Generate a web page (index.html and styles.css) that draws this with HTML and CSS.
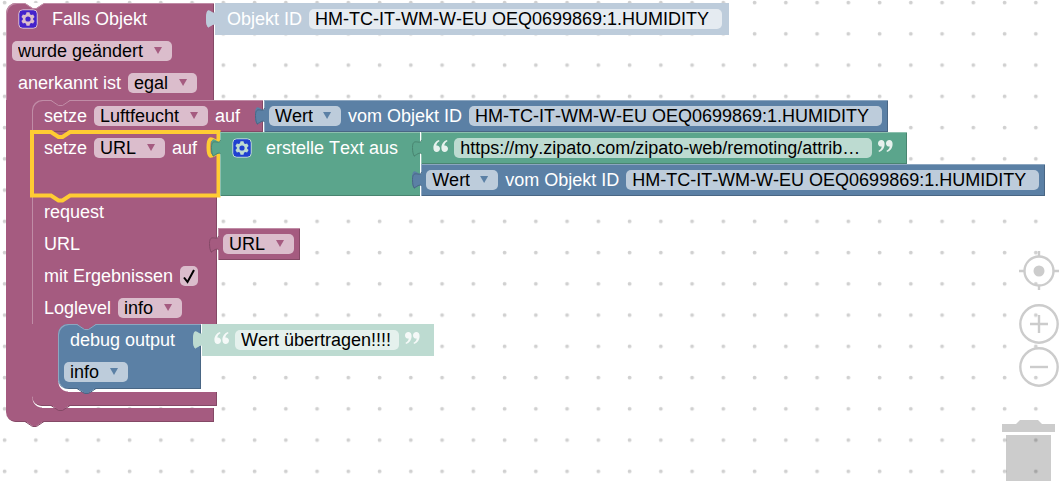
FILE: index.html
```html
<!DOCTYPE html>
<html lang="de">
<head>
<meta charset="utf-8">
<meta name="viewport" content="width=device-width, initial-scale=1">
<title>Blockly</title>
<link rel="stylesheet" href="styles.css">
</head>
<body>
<svg class="defs" aria-hidden="true">
  <defs>
    <symbol id="tab" viewBox="0 0 10 26">
      <path class="tab-fill" d="M10 6c0 12.5-10-10-10 9.5s10-3 10 9.5z"/>
      <path class="tab-dark" d="M9.500 8C8.500 14 .5 4.500 .5 15.500c0 4 .6 7 2 9"/>
      <path class="tab-low" d="M2 23.500C4 24 6 20 9.500 21.500"/>
    </symbol>
    <symbol id="notch" viewBox="0 0 19 6">
      <path class="notch-fill" d="M0 0l7.500 5h4L19 0z"/>
      <path class="notch-line" d="M0 .5l7.500 5h4L19 .5"/>
    </symbol>
    <symbol id="gear" viewBox="0 0 20 20">
      <rect class="gear-box" x=".75" y=".75" width="18.500" height="18.500" rx="4"/>
      <path class="gear-ring" fill-rule="evenodd" d="M8.500 3.300h3l.5 1.900 1.200.7 1.900-.5 1.500 2.500-1.400 1.400v1.400l1.400 1.400-1.500 2.500-1.900-.5-1.200.7-.5 1.900h-3l-.5-1.900-1.200-.7-1.900.5-1.500-2.500 1.400-1.400V9.300L3.400 7.900l1.500-2.500 1.900.5 1.200-.7zM10 7.400a2.600 2.600 0 1 0 0 5.200a2.600 2.600 0 1 0 0-5.200z"/>
    </symbol>
    <symbol id="quote" viewBox="0 0 15 12">
      <path d="M3.300 0C5.300 0 6.600 1.600 6.600 4c0 4-2.300 7-5.600 8l-.5-1.200C2.400 9.900 3.500 8.500 3.700 6.500 1.700 6.800 0 5.400 0 3.400 0 1.400 1.500 0 3.300 0z"/>
      <path d="M11.300 0c2 0 3.300 1.600 3.300 4 0 4-2.300 7-5.600 8l-.5-1.200c1.900-.9 3-2.300 3.200-4.300-2 .3-3.700-1.100-3.700-3.100 0-2 1.500-3.400 3.300-3.400z"/>
    </symbol>
    <pattern id="dots" x="2" y="0" width="31.250" height="31.250" patternUnits="userSpaceOnUse">
      <circle class="dot" cx="2.600" cy="2.600" r="1.900"/>
    </pattern>
  </defs>
</svg>

<main class="workspace">
  <svg class="grid" aria-hidden="true"><rect width="100%" height="100%" fill="url(#dots)"/></svg>

  <section class="block event purple">
    <svg class="notch notch-top"><use href="#notch"/></svg>
    <div class="row">
      <div class="cell round-top">
        <button class="gear" aria-label="Einstellungen"><svg><use href="#gear"/></svg></button>
        <span class="after-gear">Falls Objekt</span>
      </div>
      <div class="value shadow-blue lead">
        <svg class="tab"><use href="#tab"/></svg>
        <label for="oid1">Objekt ID</label>
        <input class="field oid" id="oid1" type="text" value="HM-TC-IT-WM-W-EU OEQ0699869:1.HUMIDITY">
      </div>
    </div>
    <div class="row">
      <div class="cell field-first">
        <span class="drop"><select class="field" aria-label="Auslöser"><option>wurde geändert</option></select></span>
      </div>
    </div>
    <div class="row last">
      <div class="cell">
        <label for="ack">anerkannt ist</label>
        <span class="drop"><select class="field" id="ack"><option>egal</option></select></span>
      </div>
    </div>

    <div class="body">
      <section class="block purple">
        <svg class="notch notch-top"><use href="#notch"/></svg>
        <div class="row">
          <div class="cell round-top closed">
            <label for="var1">setze</label>
            <span class="drop"><select class="field" id="var1"><option>Luftfeucht</option></select></span>
            <span>auf</span>
          </div>
          <div class="value blue">
            <svg class="tab"><use href="#tab"/></svg>
            <span class="drop"><select class="field" aria-label="Attribut"><option>Wert</option></select></span>
            <label for="oid2">vom Objekt ID</label>
            <input class="field oid" id="oid2" type="text" value="HM-TC-IT-WM-W-EU OEQ0699869:1.HUMIDITY">
          </div>
        </div>
      </section>

      <section class="block purple selected">
        <svg class="outline" viewBox="0 0 187 64" aria-hidden="true"><path d="M0 0h19l7.500 5h4L38 0h148.500v6c0 12.500-10-10-10 9.500s10-3 10 9.500v38.500H38l-7.500 5h-4l-7.500-5H0z"/></svg>
        <div class="row">
          <div class="cell top">
            <label for="var2">setze</label>
            <span class="drop"><select class="field" id="var2"><option>URL</option></select></span>
            <span>auf</span>
          </div>
          <div class="join green">
            <svg class="tab"><use href="#tab"/></svg>
            <div class="cell top">
              <button class="gear blue-gear" aria-label="Einstellungen"><svg><use href="#gear"/></svg></button>
              <span class="after-gear">erstelle Text aus</span>
            </div>
            <div class="inputs">
              <div class="value green quoted">
                <svg class="tab"><use href="#tab"/></svg>
                <svg class="quote open"><use href="#quote"/></svg>
                <input class="field url" type="text" aria-label="Text" value="https://my.zipato.com/zipato-web/remoting/attrib…">
                <svg class="quote"><use href="#quote"/></svg>
              </div>
              <div class="value blue">
                <svg class="tab"><use href="#tab"/></svg>
                <span class="drop"><select class="field" aria-label="Attribut"><option>Wert</option></select></span>
                <label for="oid3">vom Objekt ID</label>
                <input class="field oid" id="oid3" type="text" value="HM-TC-IT-WM-W-EU OEQ0699869:1.HUMIDITY">
              </div>
            </div>
          </div>
        </div>
      </section>

      <section class="block purple request">
        <div class="row"><div class="cell"><span>request</span></div></div>
        <div class="row">
          <div class="cell"><span>URL</span></div>
          <div class="value purple">
            <svg class="tab"><use href="#tab"/></svg>
            <span class="drop"><select class="field" aria-label="Variable"><option>URL</option></select></span>
          </div>
        </div>
        <div class="row">
          <div class="cell">
            <label for="res">mit Ergebnissen</label>
            <span class="check">
              <input class="field" id="res" type="checkbox" checked>
              <svg viewBox="0 0 18 20" aria-hidden="true"><path d="M4 11.500L7.500 16 14 4"/></svg>
            </span>
          </div>
        </div>
        <div class="row">
          <div class="cell">
            <label for="log">Loglevel</label>
            <span class="drop"><select class="field" id="log"><option>info</option></select></span>
          </div>
        </div>
        <div class="body">
          <section class="block blue debug">
            <svg class="notch notch-top"><use href="#notch"/></svg>
            <div class="row">
              <div class="cell round-top"><span>debug output</span></div>
              <div class="value shadow-green quoted">
                <svg class="tab"><use href="#tab"/></svg>
                <svg class="quote open"><use href="#quote"/></svg>
                <input class="field msg" type="text" aria-label="Text" value="Wert übertragen!!!!">
                <svg class="quote"><use href="#quote"/></svg>
              </div>
            </div>
            <div class="row last">
              <div class="cell field-first round-bottom">
                <span class="drop"><select class="field" aria-label="Stufe"><option>info</option></select></span>
              </div>
            </div>
            <svg class="notch notch-bottom"><use href="#notch"/></svg>
          </section>
        </div>
        <div class="foot"></div>
        <svg class="notch notch-bottom"><use href="#notch"/></svg>
      </section>
    </div>
    <div class="foot"></div>
    <svg class="notch notch-bottom"><use href="#notch"/></svg>
  </section>

  <nav class="controls" aria-label="Zoom">
    <button class="center" aria-label="Zentrieren"><svg viewBox="0 0 40 40"><circle class="ring" cx="20" cy="20" r="14.500"/><circle class="core" cx="20" cy="20" r="5.500"/><path class="ring" d="M20 0v6M20 34v5M0 20h6M34 20h6"/></svg></button>
    <button aria-label="Vergrößern"><svg viewBox="0 0 40 40"><circle class="ring" cx="20" cy="20" r="18.700"/><path class="ring" d="M11 20h18M20 11v18"/></svg></button>
    <button aria-label="Verkleinern"><svg viewBox="0 0 40 40"><circle class="ring" cx="20" cy="20" r="18.700"/><path class="ring" d="M11 20h18"/></svg></button>
    <button class="trash" aria-label="Papierkorb"><svg viewBox="0 0 53 61"><path d="M0 4h14l4-4h18l4 4h13v8H0zM4 15h45v46H4z"/></svg></button>
  </nav>
</main>
</body>
</html>
```

FILE: styles.css
```css
* { box-sizing: border-box; }

body {
  margin: 0;
  background: #fff;
  color: #fff;
  font: 18px/20px "Liberation Sans", Arial, sans-serif;
  font-kerning: none;
}

button {
  padding: 0;
  border: 0;
  background: none;
  cursor: pointer;
}

svg { display: block; flex: none; }
.defs { position: absolute; width: 0; height: 0; }

.workspace {
  position: relative;
  min-height: 100vh;
  padding: 3px 6px;
  overflow: hidden;
}

.grid {
  position: absolute;
  inset: 0;
  width: 100%;
  height: 100%;
}
.dot { fill: #d0d0d0; }

/* Block colours */
.purple { --fill: #a55b80; --light: #c08ca6; --dark: #844966; }
.blue { --fill: #5b80a5; --light: #8ca6c0; --dark: #496684; }
.green { --fill: #5ba58c; --light: #8cc0ae; --dark: #498470; }
.shadow-blue { --fill: #bdccdb; --light: #bdccdb; --dark: #bdccdb; }
.shadow-green { --fill: #bddbd1; --light: #bddbd1; --dark: #bddbd1; }

/* Block structure */
.block {
  position: relative;
  width: max-content;
}
.row { display: flex; }
.event { --width: 208px; }
.event .block { --width: auto; }
.event .request { --width: 185px; }
.event .debug { --width: 143px; }

.cell {
  display: flex;
  align-items: center;
  gap: 7px;
  width: var(--width);
  min-height: 32px;
  padding: 0 23px 0 12px;
  background: var(--fill);
  box-shadow: inset 1px 0 var(--light), inset -1px 0 var(--dark);
  white-space: nowrap;
}
.cell.top { align-items: flex-start; padding-top: 6px; padding-right: 22px; }
.cell.field-first { padding-left: 6px; }
.round-top {
  border-top-left-radius: 10px;
  box-shadow: inset 1px 1px var(--light), inset -1px 0 var(--dark);
}
.closed { box-shadow: inset 1px 1px var(--light), inset -1px -1px var(--dark); }
.round-bottom {
  border-bottom-left-radius: 10px;
  box-shadow: inset 1px 0 var(--light), inset -1px -1px var(--dark);
}
.last .cell { min-height: 33px; padding-bottom: 1px; }

.body {
  position: relative;
  z-index: 0;
  border-left: 26px solid var(--fill);
}
.body::before,
.body::after {
  content: "";
  position: absolute;
  z-index: -1;
  left: 0;
  width: 10px;
  height: 10px;
}
.body::before { top: 0; background: var(--fill); }
.body::after {
  bottom: 0;
  background: radial-gradient(circle at 100% 0, transparent 9px, var(--fill) 10px);
}
.event > .body { padding-bottom: 2px; }
.request > .body { padding-bottom: 3px; }

.foot {
  width: var(--width);
  height: 14px;
  background: var(--fill);
  border-bottom-left-radius: 10px;
  box-shadow: inset -1px -1px var(--dark);
}

.value {
  position: relative;
  display: flex;
  align-items: center;
  gap: 7px;
  width: max-content;
  height: 32px;
  margin-left: 1px;
  padding: 0 6px 0 5px;
  background: var(--fill);
  box-shadow: inset 1px 1px var(--light), inset -1px -1px var(--dark);
  white-space: nowrap;
}
.value.lead { padding: 0 7px 0 12px; }
.value.quoted { gap: 6px; padding: 0 14px 0 12px; }

.join {
  position: relative;
  display: flex;
  margin-left: 1px;
}
.join > .cell {
  box-shadow: inset 1px 1px var(--light), inset 0 -1px var(--dark);
}
.inputs { display: flex; flex-direction: column; }

/* Connectors */
.tab {
  position: absolute;
  z-index: 2;
  left: -9px;
  top: 0;
  width: 10px;
  height: 26px;
}
.tab-fill { fill: var(--fill); }
.tab-dark, .tab-low { fill: none; stroke: var(--dark); }

.notch {
  position: absolute;
  z-index: 1;
  left: 19px;
  width: 19px;
  height: 6px;
}
.notch-top { top: 0; }
.notch-bottom { top: 100%; margin-top: -1px; }
.notch-fill { fill: var(--fill); }
.notch-line { fill: none; stroke: var(--line, var(--dark)); }
.notch-top { --line: var(--light); }
.event > .notch-top { --fill: #fff; }
.debug > .notch-top { --fill: #a55b80; }

.selected { z-index: 1; }
.outline {
  position: absolute;
  inset: 0 auto auto 0;
  width: 187px;
  height: 64px;
  overflow: visible;
}
.outline path { fill: none; stroke: #fc3; stroke-width: 4; }

/* Fields */
.field {
  appearance: none;
  height: 20px;
  margin: 0;
  padding: 0 6px;
  border: 0;
  border-radius: 5px;
  background: rgba(255, 255, 255, .6);
  color: #000;
  font: inherit;
  font-kerning: none;
}
.drop { position: relative; display: flex; }
.drop .field { padding-right: 28px; }
.drop::after {
  content: "";
  position: absolute;
  right: 10px;
  top: 6px;
  width: 8px;
  height: 7px;
  background: var(--fill);
  clip-path: polygon(0 0, 100% 0, 50% 100%);
  pointer-events: none;
}
.oid { width: 413px; }
.url { width: 418px; }
.msg { width: 164px; }

.check { position: relative; display: flex; }
.check .field { width: 18px; padding: 0; }
.check svg {
  position: absolute;
  inset: 0;
  width: 18px;
  height: 20px;
  pointer-events: none;
}
.check path { fill: none; stroke: #000; stroke-width: 2; }

.gear { --box: #4422cc; --rim: #dbbdcc; }
.blue-gear { --box: #2040d0; --rim: #bddbd1; }
.gear svg { width: 20px; height: 20px; }
.gear-box { fill: var(--box); stroke: var(--rim); }
.gear-ring { fill: var(--rim); }
.after-gear { margin-left: 7px; }

.quote { width: 15px; height: 12px; margin-bottom: 4px; fill: #fff; opacity: .85; }
.quote.open { transform: rotate(180deg); }

/* Canvas controls */
.controls {
  position: absolute;
  z-index: 3;
  right: 2px;
  bottom: 0;
  display: flex;
  flex-direction: column;
  align-items: flex-end;
  gap: 3px;
}
.controls svg { width: 40px; height: 40px; }
.controls .center { margin-bottom: 10px; }
.controls .trash { margin: 30px 4px 0 0; }
.controls .trash svg { width: 53px; height: 61px; }
.trash path { fill: #000; opacity: .2; }
.ring { fill: none; stroke: #ccc; stroke-width: 2.4; }
.core { fill: #ccc; }
```
